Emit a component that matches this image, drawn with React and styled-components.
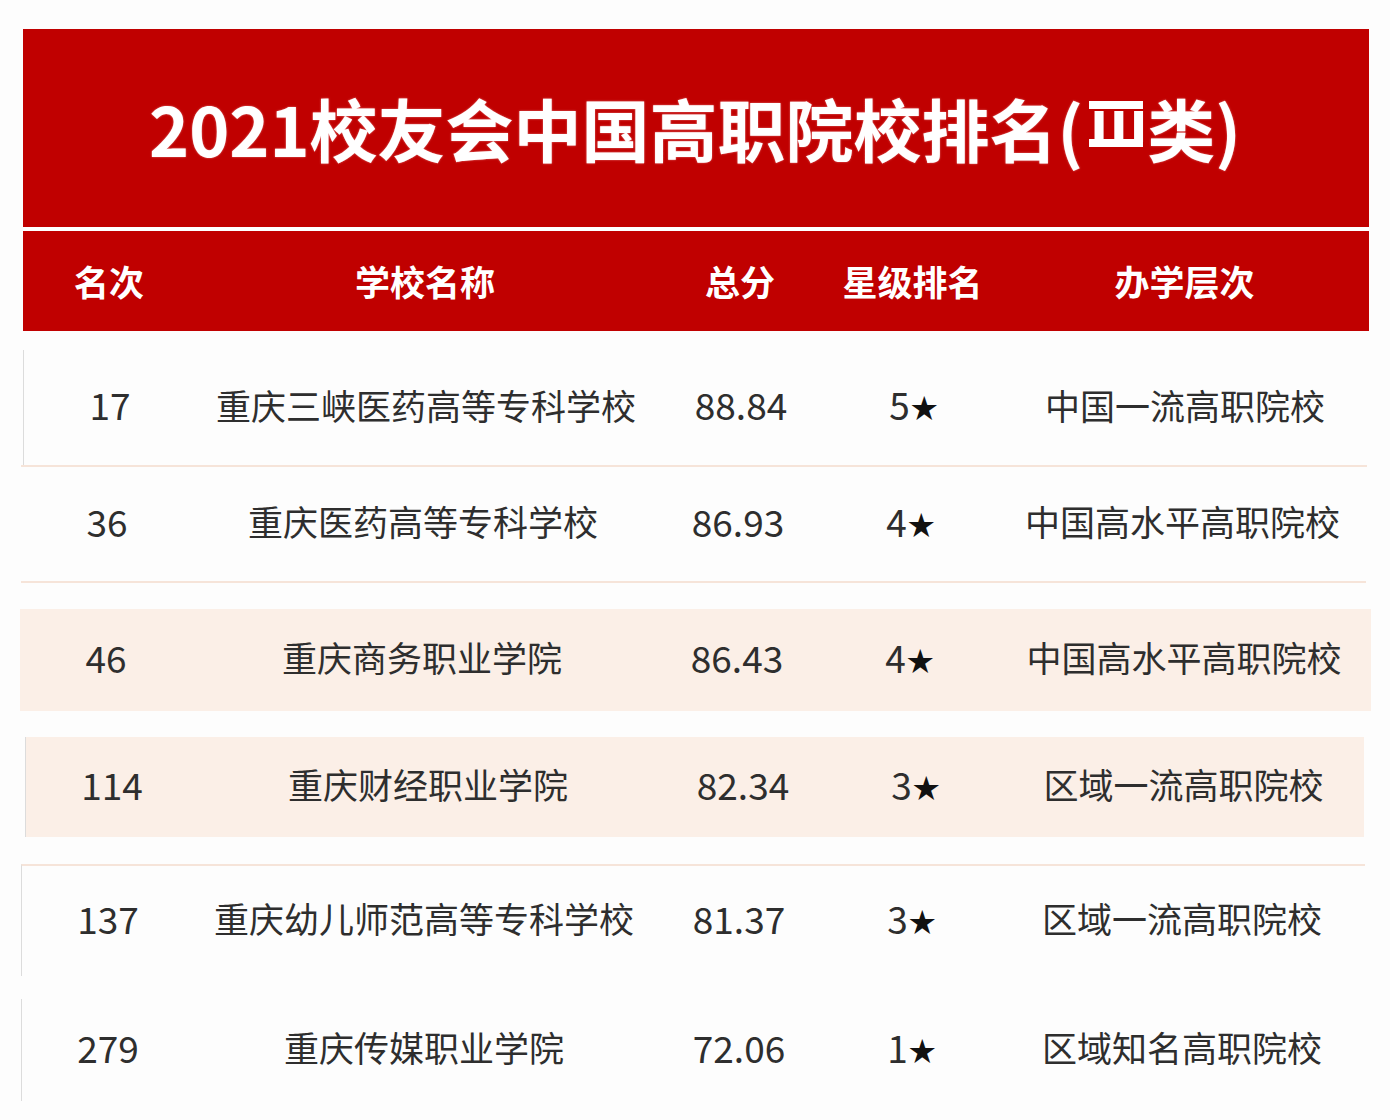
import React from "react";
import styled, { createGlobalStyle } from "styled-components";

const GlobalStyle = createGlobalStyle`
  html, body {
    margin: 0;
    padding: 0;
    background: #fdfdfd;
  }
  body {
    font-family: "Noto Sans CJK SC", "Noto Sans", sans-serif;
  }
`;

const Page = styled.div`
  width: 1390px;
  height: 1120px;
  box-sizing: border-box;
  padding: 29px 21px 0 23px;
  background: #fdfdfd;
  overflow: hidden;
`;

const Banner = styled.div`
  height: 198px;
  background: #c00000;
  display: flex;
  align-items: center;
  justify-content: center;
`;

const Title = styled.h1`
  margin: 0 0 0 -2px;
  color: #ffffff;
  font-family: "Noto Sans CJK SC", sans-serif;
  font-weight: 700;
  font-size: 68px;
  letter-spacing: 0;
  line-height: 1;
  text-shadow: 0 0 2px rgba(255, 220, 220, 0.6);
`;

/* roman numeral with the serif bars of the original typeface */
const Numeral = styled.span`
  display: inline-block;
  box-sizing: border-box;
  width: 38px;
  height: 46px;
  margin: 0 12px 0 14px;
  border-top: 8px solid #ffffff;
  border-bottom: 8px solid #ffffff;
  font-size: 42px;
  line-height: 30px;
  text-align: center;
  vertical-align: 15px;
  transform: scaleX(1.42);
  text-shadow: none;
`;

const Divider = styled.div`
  height: 4px;
  background: #ffffff;
`;

const columns = "172px 460px 170px 175px 1fr";

const HeaderRow = styled.div`
  display: grid;
  grid-template-columns: ${columns};
  height: 100px;
  align-items: center;
  background: #c00000;
  margin-bottom: 19px;
`;

const HeadCell = styled.div`
  text-align: center;
  color: #ffffff;
  font-weight: 700;
  font-size: 35px;
  margin-top: -2px;
`;

const Row = styled.div`
  display: grid;
  grid-template-columns: ${columns};
  align-items: center;
  height: ${(p) => p.h}px;
  margin: ${(p) => p.gap}px ${(p) => p.right}px 0 ${(p) => p.left}px;
  background: ${(p) => (p.tint ? "#fbefe7" : "#fdfdfd")};
  border-top: ${(p) => (p.line ? "2px solid #f6e4d9" : "none")};
  border-left: ${(p) => (p.edge ? "1px solid #dcdcdc" : "none")};
`;

const Cell = styled.div`
  text-align: center;
  color: #2e2e2e;
  font-size: ${(p) => (p.num ? 37 : 35)}px;
  white-space: nowrap;
  padding-bottom: 7px;
`;

const Star = styled.span`
  font-family: "Noto Sans CJK SC", sans-serif;
  font-size: 27px;
  color: #111111;
  margin-left: 1px;
  position: relative;
  top: -2px;
`;

const heads = ["名次", "学校名称", "总分", "星级排名", "办学层次"];

const rows = [
  { rank: "17", name: "重庆三峡医药高等专科学校", score: "88.84", star: 5, level: "中国一流高职院校", h: 115, gap: 0, left: 0, right: 0, edge: true },
  { rank: "36", name: "重庆医药高等专科学校", score: "86.93", star: 4, level: "中国高水平高职院校", h: 114, gap: 0, left: -2, right: 2, line: true },
  { rank: "46", name: "重庆商务职业学院", score: "86.43", star: 4, level: "中国高水平高职院校", h: 102, gap: 26, left: -3, right: -2, tint: true },
  { rank: "114", name: "重庆财经职业学院", score: "82.34", star: 3, level: "区域一流高职院校", h: 100, gap: 26, left: 2, right: 5, tint: true, edge: true },
  { rank: "137", name: "重庆幼儿师范高等专科学校", score: "81.37", star: 3, level: "区域一流高职院校", h: 110, gap: 27, left: -2, right: 4, line: true, edge: true },
  { rank: "279", name: "重庆传媒职业学院", score: "72.06", star: 1, level: "区域知名高职院校", h: 102, gap: 23, left: -2, right: 4, edge: true },
];

const Underline = styled.div`
  height: 2px;
  margin: 0 3px 0 -2px;
  background: #f6e4d9;
`;

export default function App() {
  return (
    <Page>
      <GlobalStyle />
      <Banner>
        <Title>
          2021校友会中国高职院校排名(<Numeral>Ⅲ</Numeral>类)
        </Title>
      </Banner>
      <Divider />
      <HeaderRow>
        {heads.map((h) => (
          <HeadCell key={h}>{h}</HeadCell>
        ))}
      </HeaderRow>
      {rows.map((r, i) => (
        <React.Fragment key={r.rank}>
          <Row h={r.h} gap={r.gap} left={r.left} right={r.right} tint={r.tint} line={r.line} edge={r.edge}>
            <Cell num>{r.rank}</Cell>
            <Cell>{r.name}</Cell>
            <Cell num>{r.score}</Cell>
            <Cell num>
              {r.star}
              <Star>★</Star>
            </Cell>
            <Cell>{r.level}</Cell>
          </Row>
          {i === 1 && <Underline />}
        </React.Fragment>
      ))}
    </Page>
  );
}
